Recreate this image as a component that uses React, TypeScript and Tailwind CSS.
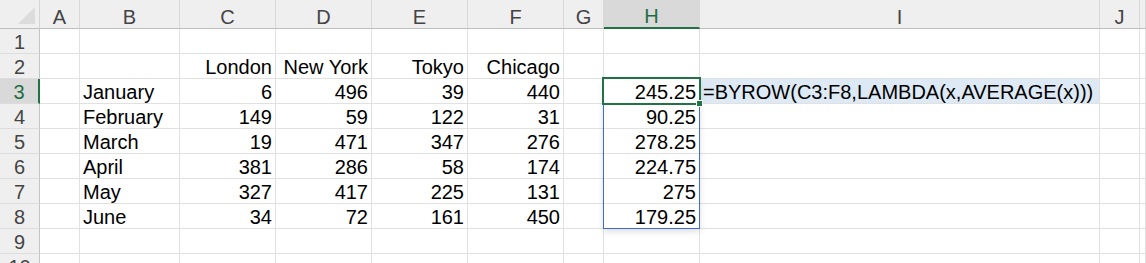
const cols = ["A", "B", "C", "D", "E", "F", "G", "H", "I", "J", ""];

type Cell = { v: string; left?: boolean };

const rows: Record<number, Record<string, Cell>> = {
  2: {
    C: { v: "London" },
    D: { v: "New York" },
    E: { v: "Tokyo" },
    F: { v: "Chicago" },
  },
  3: {
    B: { v: "January", left: true },
    C: { v: "6" },
    D: { v: "496" },
    E: { v: "39" },
    F: { v: "440" },
    H: { v: "245.25" },
    I: { v: "=BYROW(C3:F8,LAMBDA(x,AVERAGE(x)))", left: true },
  },
  4: {
    B: { v: "February", left: true },
    C: { v: "149" },
    D: { v: "59" },
    E: { v: "122" },
    F: { v: "31" },
    H: { v: "90.25" },
  },
  5: {
    B: { v: "March", left: true },
    C: { v: "19" },
    D: { v: "471" },
    E: { v: "347" },
    F: { v: "276" },
    H: { v: "278.25" },
  },
  6: {
    B: { v: "April", left: true },
    C: { v: "381" },
    D: { v: "286" },
    E: { v: "58" },
    F: { v: "174" },
    H: { v: "224.75" },
  },
  7: {
    B: { v: "May", left: true },
    C: { v: "327" },
    D: { v: "417" },
    E: { v: "225" },
    F: { v: "131" },
    H: { v: "275" },
  },
  8: {
    B: { v: "June", left: true },
    C: { v: "34" },
    D: { v: "72" },
    E: { v: "161" },
    F: { v: "450" },
    H: { v: "179.25" },
  },
};

function HeaderRow() {
  return (
    <>
      <div className="h-[29px] bg-[#efefef] border-b border-r border-b-[#bdbdbd] border-r-[#d5d5d5] flex items-end justify-end">
        <svg width="18" height="18" viewBox="0 0 18 18" className="mb-[3px] mr-[3px]">
          <polygon points="17,0 17,17 0,17" fill="#dcdcdc" />
        </svg>
      </div>
      {cols.map((c, i) => {
        const active = c === "H";
        return (
          <div
            key={i}
            className={`h-[29px] border-r border-r-[#d8d8d8] flex items-end justify-center leading-[22px] ${
              active
                ? "bg-[#d9d9d9] text-[#1e6e42] border-b-2 border-b-[#217346]"
                : "bg-[#efefef] text-[#444] border-b border-b-[#bdbdbd]"
            }`}
          >
            {c}
          </div>
        );
      })}
    </>
  );
}

function BodyRow({ n }: { n: number }) {
  const data = rows[n] || {};
  const active = n === 3;
  return (
    <>
      <div
        className={`h-[25px] border-b border-b-[#dcdcdc] flex items-end justify-center leading-[22px] ${
          active
            ? "bg-[#d9d9d9] text-[#1e6e42] border-r-2 border-r-[#217346]"
            : "bg-[#efefef] text-[#444] border-r border-r-[#c4c4c4]"
        }`}
      >
        {n}
      </div>
      {cols.map((c, i) => {
        const cell = data[c];
        const formula = n === 3 && c === "I";
        return (
          <div
            key={i}
            className={`h-[25px] border-b border-r border-[#e1e1e1] flex items-end leading-[22px] text-black whitespace-nowrap ${
              cell?.left ? "justify-start pl-[3px]" : "justify-end pr-[3px]"
            } ${formula ? "bg-[#dde9f5]" : "bg-white"}`}
          >
            {cell?.v}
          </div>
        );
      })}
    </>
  );
}

export default function App() {
  return (
    <div className="h-[263px] w-full overflow-hidden bg-white">
      <div
        className="relative grid grid-cols-[40px_40px_100px_96px_96px_96px_96px_40px_96px_400px_40px_1fr] text-[20px]"
        style={{ fontFamily: '"Liberation Sans", Arial, sans-serif' }}
      >
        <HeaderRow />
        {[1, 2, 3, 4, 5, 6, 7, 8, 9, 10].map((n) => (
          <BodyRow key={n} n={n} />
        ))}

        {/* spill range */}
        <div className="absolute left-[603px] top-[78px] w-[97px] h-[151px] border border-[#3b6fcf] shadow-[0_3px_6px_rgba(0,0,0,0.12)] pointer-events-none" />
        {/* active cell */}
        <div className="absolute left-[602px] top-[77px] w-[99px] h-[28px] border-2 border-[#217346] pointer-events-none" />
        <div className="absolute left-[696px] top-[100px] w-[7px] h-[7px] bg-[#217346] border border-white pointer-events-none" />
      </div>
    </div>
  );
}
